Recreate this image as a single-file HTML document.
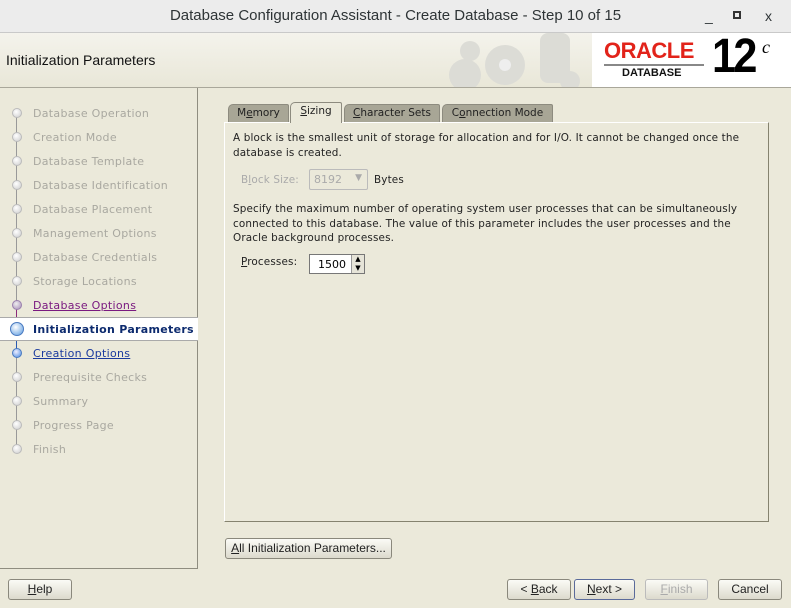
<!DOCTYPE html>
<html><head><meta charset="utf-8"><style>
*{box-sizing:border-box;margin:0;padding:0}
body{width:791px;height:608px;overflow:hidden;background:#ebe9da;font-family:"DejaVu Sans","Liberation Sans",sans-serif;font-size:11px;position:relative}
.abs{position:absolute}
#title{left:0;top:0;width:791px;height:33px;background:#ececec;border-bottom:1px solid #c9c9c9;font-family:"Liberation Sans",sans-serif;font-size:15px;color:#2e3436;text-align:center;line-height:32px}
#hdr{left:0;top:33px;width:791px;height:55px;background:linear-gradient(#f4f3ec,#e9e7d8);border-bottom:1px solid #a9a79a}
#hdr .t{left:6px;top:19px;font-family:"Liberation Sans",sans-serif;font-size:14px;color:#111}
#logo{left:592px;top:0;width:199px;height:54px;background:#fff}
#left{left:0;top:88px;width:198px;height:481px;border-right:1px solid #8f8d80;border-bottom:1px solid #8f8d80}
.st{position:absolute;left:33px;color:#a9a8a0;font-size:11px;letter-spacing:.3px}
.dot{position:absolute;left:12px;width:10px;height:10px;border-radius:50%;background:radial-gradient(circle at 40% 35%,#fff,#ccc);border:1px solid #bbb}
.tab{position:absolute;top:104px;height:19px;border:1px solid #8d8b7f;border-bottom:none;background:#a8a696;font-size:10.5px;color:#222;text-align:center;line-height:17px;border-radius:5px 2px 0 0}
#panel{left:224px;top:122px;width:545px;height:400px;border:1px solid #85836f;border-top-color:#fff;border-left-color:#fff;background:#ebe9da}
.btn{position:absolute;height:21px;border:1px solid #8a887c;border-radius:3px;background:linear-gradient(#fbfbf6,#dcdacd);font-family:"Liberation Sans",sans-serif;font-size:12px;color:#222;text-align:center;line-height:19px}
.p{font-size:10.4px;color:#222;line-height:14.5px;letter-spacing:.15px}
</style></head><body>
<div id="title" class="abs">Database Configuration Assistant - Create Database - Step 10 of 15
<span class="abs" style="left:705px;top:0;font-size:14px">_</span>
<span class="abs" style="left:733px;top:11px;width:8px;height:8px;border:2px solid #333"></span>
<span class="abs" style="left:765px;top:0;font-size:14px">x</span></div>
<div id="hdr" class="abs"><div class="t abs">Initialization Parameters</div>
<svg class="abs" style="left:440px;top:0" width="152" height="54"><g fill="#dcdcd6"><circle cx="65" cy="32" r="20"/><circle cx="30" cy="18" r="10"/><circle cx="25" cy="42" r="16"/><rect x="100" y="0" width="30" height="50" rx="8"/><circle cx="130" cy="48" r="10"/></g><circle cx="65" cy="32" r="6" fill="#eee"/></svg>
<div id="logo" class="abs">
<div class="abs" style="left:12px;top:5px;font-family:'Liberation Sans',sans-serif;font-weight:bold;font-size:22px;color:#e2231a;letter-spacing:-.5px">ORACLE</div>
<div class="abs" style="left:12px;top:31px;width:100px;border-top:2px solid #888"></div>
<div class="abs" style="left:30px;top:34px;font-family:'Liberation Sans',sans-serif;font-weight:bold;font-size:11px;color:#111">DATABASE</div>
<div class="abs" style="left:120px;top:-4px;font-family:'Liberation Sans',sans-serif;font-weight:bold;font-size:48px;color:#000;letter-spacing:-3px;transform:scaleX(.9);transform-origin:left">12</div>
<div class="abs" style="left:170px;top:4px;font-family:'Liberation Serif',serif;font-style:italic;font-size:18px;color:#000">c</div>
</div></div>
<div id="left" class="abs">
<div class="abs" style="left:16px;top:25px;width:1px;height:192px;background:#999"></div>
<div class="abs" style="left:16px;top:217px;width:1px;height:24px;background:#8a2a7a"></div>
<div class="abs" style="left:16px;top:241px;width:1px;height:24px;background:#2a5ab0"></div>
<div class="abs" style="left:16px;top:265px;width:1px;height:96px;background:#999"></div>
<div class="abs" style="left:0;top:229px;width:198px;height:24px;background:#fff;border-top:1px solid #aaa;border-bottom:1px solid #aaa"></div>
<div class="dot" style="top:20px"></div><div class="st" style="top:19px">Database Operation</div>
<div class="dot" style="top:44px"></div><div class="st" style="top:43px">Creation Mode</div>
<div class="dot" style="top:68px"></div><div class="st" style="top:67px">Database Template</div>
<div class="dot" style="top:92px"></div><div class="st" style="top:91px">Database Identification</div>
<div class="dot" style="top:116px"></div><div class="st" style="top:115px">Database Placement</div>
<div class="dot" style="top:140px"></div><div class="st" style="top:139px">Management Options</div>
<div class="dot" style="top:164px"></div><div class="st" style="top:163px">Database Credentials</div>
<div class="dot" style="top:188px"></div><div class="st" style="top:187px">Storage Locations</div>
<div class="dot" style="top:212px;background:radial-gradient(circle at 40% 35%,#eee,#a58ab8);border-color:#9a80ad"></div><div class="st" style="top:211px;color:#7a1a80;text-decoration:underline">Database Options</div>
<div class="dot" style="top:234px;left:10px;width:14px;height:14px;background:radial-gradient(circle at 40% 35%,#fff,#5a9ae0);border-color:#4a7ac0"></div><div class="st" style="top:235px;color:#0c2a6e;font-weight:bold">Initialization Parameters</div>
<div class="dot" style="top:260px;background:radial-gradient(circle at 40% 35%,#eef,#4a8ae0);border-color:#4a7ac0"></div><div class="st" style="top:259px;color:#1a3a9e;text-decoration:underline">Creation Options</div>
<div class="dot" style="top:284px"></div><div class="st" style="top:283px">Prerequisite Checks</div>
<div class="dot" style="top:308px"></div><div class="st" style="top:307px">Summary</div>
<div class="dot" style="top:332px"></div><div class="st" style="top:331px">Progress Page</div>
<div class="dot" style="top:356px"></div><div class="st" style="top:355px">Finish</div>
</div>
<div class="tab" style="left:228px;width:61px">M<u>e</u>mory</div>
<div class="tab" style="left:290px;width:52px;background:#ebe9da;top:102px;height:21px;border-color:#8d8b7f;z-index:2"><u>S</u>izing</div>
<div class="tab" style="left:344px;width:96px"><u>C</u>haracter Sets</div>
<div class="tab" style="left:442px;width:111px">C<u>o</u>nnection Mode</div>
<div id="panel" class="abs">
<div class="p abs" style="left:8px;top:8px;width:530px">A block is the smallest unit of storage for allocation and for I/O. It cannot be changed once the database is created.</div>
<div class="p abs" style="left:16px;top:50px;color:#aaa">B<u>l</u>ock Size:</div>
<div class="abs" style="left:84px;top:46px;width:59px;height:21px;border:1px solid #bbb;border-radius:2px;color:#aaa;padding:3px 4px;font-size:11px">8192 <span style="position:absolute;right:5px;top:3px;font-size:9px">▼</span></div>
<div class="p abs" style="left:149px;top:50px">Bytes</div>
<div class="p abs" style="left:8px;top:79px;width:530px">Specify the maximum number of operating system user processes that can be simultaneously connected to this database. The value of this parameter includes the user processes and the Oracle background processes.</div>
<div class="p abs" style="left:16px;top:132px"><u>P</u>rocesses:</div>
<div class="abs" style="left:84px;top:131px;width:56px;height:20px;border:1px solid #777;background:#fff;font-size:11px;padding:3px 0 0 8px">1500</div>
<div class="abs" style="left:126px;top:132px;width:13px;height:18px;border-left:1px solid #999;background:#e6e4d8;font-size:7px;text-align:center;line-height:9px">▲<br>▼</div>
</div>
<div class="btn" style="left:225px;top:538px;width:167px"><u>A</u>ll Initialization Parameters...</div>
<div class="btn" style="left:8px;top:579px;width:64px"><u>H</u>elp</div>
<div class="btn" style="left:507px;top:579px;width:64px">&lt; <u>B</u>ack</div>
<div class="btn" style="left:574px;top:579px;width:61px;border-color:#5a6a9a"><u>N</u>ext &gt;</div>
<div class="btn" style="left:645px;top:579px;width:63px;color:#aaa;border-color:#bbb"><u>F</u>inish</div>
<div class="btn" style="left:718px;top:579px;width:64px">Cancel</div>
</body></html>
